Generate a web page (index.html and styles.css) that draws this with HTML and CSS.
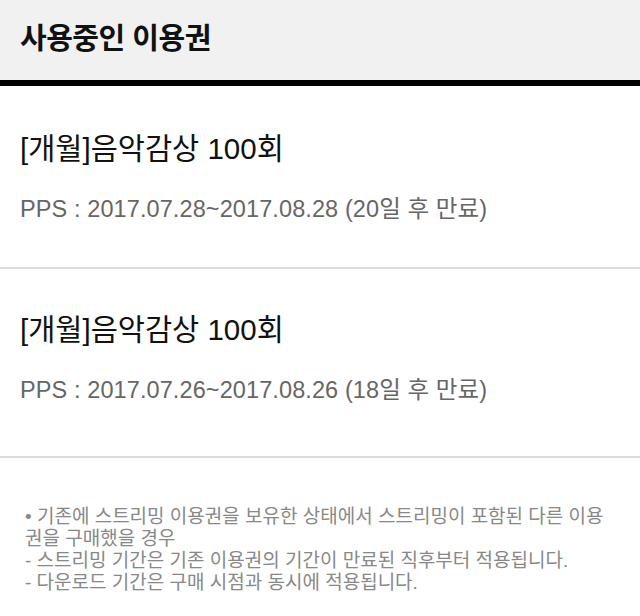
FILE: index.html
```html
<!DOCTYPE html>
<html lang="ko">
<head>
    <meta charset="UTF-8">
    <meta name="viewport" content="width=device-width, initial-scale=1.0">
    <title>사용중인 이용권</title>
    <link rel="stylesheet" href="styles.css">
</head>
<body>
    <header class="page-header">
        <h1>사용중인 이용권</h1>
    </header>

    <ul class="ticket-list">
        <li class="ticket">
            <div class="ticket-name">[개월]음악감상 100회</div>
            <div class="ticket-period">PPS : 2017.07.28~2017.08.28 (20일 후 만료)</div>
        </li>
        <li class="ticket">
            <div class="ticket-name">[개월]음악감상 100회</div>
            <div class="ticket-period">PPS : 2017.07.26~2017.08.26 (18일 후 만료)</div>
        </li>
    </ul>

    <div class="notice">
        <p>• 기존에 스트리밍 이용권을 보유한 상태에서 스트리밍이 포함된 다른 이용권을 구매했을 경우</p>
        <p>- 스트리밍 기간은 기존 이용권의 기간이 만료된 직후부터 적용됩니다.</p>
        <p>- 다운로드 기간은 구매 시점과 동시에 적용됩니다.</p>
    </div>
</body>
</html>
```

FILE: styles.css
```css
body {
    font-family: "Liberation Sans", "Noto Sans CJK KR", sans-serif;
    margin: 0;
    background-color: #fff;
    color: #111;
}
.page-header {
    height: 86px;
    box-sizing: border-box;
    display: flex;
    align-items: center;
    padding: 0 20px 3px;
    background-color: #f1f1f1;
    border-bottom: 6px solid #000;
}
.page-header h1 {
    margin: 0;
    font-size: 29px;
    font-weight: bold;
    line-height: 34px;
    letter-spacing: -0.5px;
}
.ticket-list {
    list-style: none;
    margin: 0;
    padding: 0;
}
.ticket {
    padding: 45px 20px 43px;
    border-bottom: 2px solid #dcdcdc;
}
.ticket:nth-child(2) {
    padding-top: 43px;
    padding-bottom: 51px;
}
.ticket-name {
    font-size: 29.5px;
    line-height: 36px;
    color: #111;
}
.ticket-period {
    margin-top: 27px;
    font-size: 23.5px;
    line-height: 30px;
    letter-spacing: 0.1px;
    color: #666;
}
.notice {
    padding: 48px 25px 0;
    color: #888;
    font-size: 19px;
    line-height: 22px;
}
.notice p {
    margin: 0;
}
```
